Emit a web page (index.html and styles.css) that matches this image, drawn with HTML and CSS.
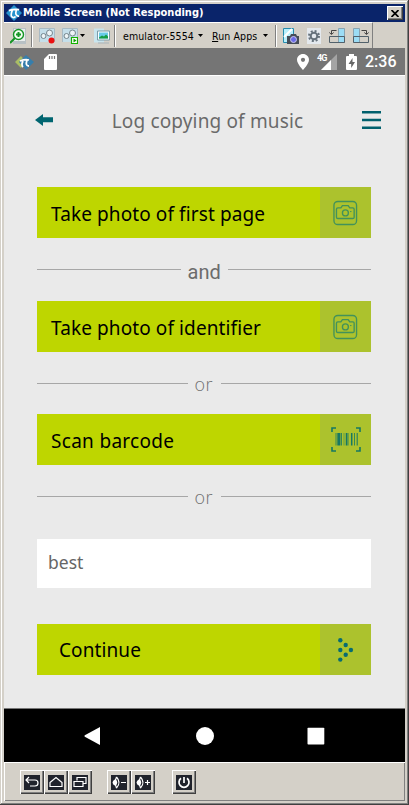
FILE: index.html
```html
<!DOCTYPE html>
<html lang="en">
<head>
<meta charset="utf-8">
<title>Mobile Screen</title>
<link rel="stylesheet" href="styles.css">
</head>
<body>
<svg class="defs" aria-hidden="true">
  <symbol id="camera" viewBox="0 0 26 26"><g fill="none" stroke="#42925a" stroke-width="1.4"><rect x="1" y="1" width="23.5" height="24" rx="4"/><path d="M5 7.700h3.200l1.600-2.300h6l1.600 2.300h3.200q1.400 0 1.400 1.400v8.200q0 1.400-1.400 1.400H5q-1.400 0-1.400-1.400V9.100q0-1.400 1.400-1.400z"/><circle cx="12.900" cy="12.900" r="3.100"/><path d="M17.700 11.500h1.500" stroke-width="1"/></g></symbol>
  <symbol id="link" viewBox="0 0 16 16"><path d="M0 0h16v14H0z" fill="#c5dfea"/><path d="M.5 14V.5h15V14" fill="none" stroke="#a9bac4"/><g fill="#edf4f6" stroke="#74858d"><circle cx="4.500" cy="8" r="2.500"/><circle cx="10.500" cy="5" r="3"/></g></symbol>
  <symbol id="rotate" viewBox="0 0 17 16"><path d="M9 0h7v14H9z" fill="#9bdcf5"/><path d="M9.500.5h6v14h-6z" fill="none" stroke="#8aa3b0"/><path d="M.5 8.500h15v6H.5z" fill="none" stroke="#52616b"/><path d="M2.500 6V2.500h5M.3 4.500l2.200 2 2.200-2" fill="none" stroke="#444"/></symbol>
</svg>
<main class="window">
  <header class="titlebar">
    <svg class="app-logo" viewBox="0 0 17 17"><path d="M8.500 0 17 8.500 8.500 17 0 8.500z" fill="#2693ce"/><path d="M3 6q5-2 11-1M7 5Q4 12 7 13q2 1 3-1M11 5q-2 7 3 7" fill="none" stroke="#fff" stroke-width="1.800"/></svg>
    <h1>Mobile Screen (Not Responding)</h1>
    <button class="close" aria-label="Close"><svg viewBox="0 0 8 7"><path d="M.5 0 7.500 7M7.500 0 .5 7" stroke="#000" stroke-width="1.700"/></svg></button>
  </header>
  <nav class="toolbar">
    <svg class="tool zoom" viewBox="0 0 16 16"><path d="M3 0h13v16H3z" fill="#b8c1c5"/><path d="M4 1h11v12H4z" fill="#e9eeee"/><circle cx="8.500" cy="6.500" r="5" fill="#f2fff1" stroke="#149525" stroke-width="1.400"/><path d="M8.500 4v5M6 6.500h5M5 10l-5 5" stroke="#149525" stroke-width="2"/></svg>
    <i class="sep first"></i>
    <div class="tool record"><svg viewBox="0 0 16 16"><use href="#link"/><circle cx="12.500" cy="12.500" r="3" fill="#eb1010"/></svg></div>
    <div class="tool play"><svg viewBox="0 0 16 16"><use href="#link"/><path d="M9.500 9.500h6v6h-6z" fill="#fff" stroke="#13b300" stroke-width="1.200"/><path d="m11.500 10.500 3 2-3 2z" fill="#0a9c00"/></svg></div>
    <i class="arrow play-arrow"></i>
    <svg class="tool picture" viewBox="0 0 16 15"><path d="M0 0h10v14H0z" fill="#c9e5ee"/><path d="M3.500 2.500h12v9h-12z" fill="#f8ffff" stroke="#7b9ca9"/><path d="M5 4h9v6H5z" fill="#68cbe8"/><path d="m5 9 3-2 2 1 2-2 2 2v2H5z" fill="#149c45"/><path d="M4 14.500h11" stroke="#a7b4ba"/></svg>
    <i class="sep second"></i>
    <span class="device">emulator-5554</span><i class="arrow device-arrow"></i>
    <span class="run"><u>R</u>un Apps</span><i class="arrow run-arrow"></i>
    <i class="sep third"></i>
    <svg class="tool snap" viewBox="0 0 16 16"><path d="M.5.5h10v14H.5z" fill="#b8effc" stroke="#268cae"/><path d="M1 9 9 1" stroke="#fff" stroke-width="2"/><path d="M4 8h3l1-2h5l1 2h2v8H4z" fill="#454c57"/><circle cx="10.500" cy="11.500" r="3" fill="#6b6be8" stroke="#c8c8ed"/></svg>
    <svg class="tool gear" viewBox="0 0 14 16"><path d="M0 0h14v16H0z" fill="#e4e9ee"/><circle cx="7" cy="8" r="5" fill="none" stroke="#65717b" stroke-width="2" stroke-dasharray="2 1.930"/><circle cx="7" cy="8" r="3.300" fill="none" stroke="#65717b" stroke-width="2"/></svg>
    <svg class="tool left" viewBox="0 0 17 16"><use href="#rotate"/></svg>
    <svg class="tool right" viewBox="0 0 17 16"><use href="#rotate"/></svg>
  </nav>
  <div class="status">
    <svg class="debug" viewBox="0 0 19 15"><path d="m0 7 6-6 5 6-5 6z" fill="#aabd65"/><path d="m4 7 7-7 8 7-8 8z" fill="#367eac"/><path d="M5 6q5-2 9-1M8 6q-2 4 0 6M12 5q-2 6 2 6" fill="none" stroke="#fff" stroke-width="1.800"/></svg>
    <svg class="sd" viewBox="0 0 13 16"><path d="M5 0h7q1 0 1 1v14q0 1-1 1H1q-1 0-1-1V5z" fill="#fff"/><path d="M5.500 2v3M8 2v3M10.500 2v3" stroke="#777" stroke-width="1.200"/></svg>
    <svg class="pin" viewBox="0 0 12 16"><path fill="#fff" fill-rule="evenodd" d="M6 0C2.700 0 0 2.500 0 5.800 0 10 6 16 6 16s6-6 6-10.200C12 2.500 9.300 0 6 0zm0 3.700a2.100 2.100 0 1 0 0 4.200 2.100 2.100 0 0 0 0-4.200z"/></svg>
    <span class="network">4G</span>
    <svg class="signal" viewBox="0 0 16 16"><path d="M16 0v16H0z" fill="#a4a4a4"/><path d="M10 6v10H0z" fill="#fff"/></svg>
    <svg class="battery" viewBox="0 0 11 16"><path d="M3 0h5v2h2q1 0 1 1v12q0 1-1 1H1q-1 0-1-1V3q0-1 1-1h2z" fill="#fff"/><path d="M6.500 4 2.500 10h2.700v4L9 8H6.500z" fill="#666"/></svg>
    <time>2:36</time>
  </div>
  <section class="screen">
    <header class="page-head">
      <svg class="back" viewBox="0 0 18 12"><path d="M0 6 8 0v3.300h10v5H8V12z" fill="#006570"/></svg>
      <h2>Log copying of music</h2>
      <svg class="menu" viewBox="0 0 19 18"><path d="M0 1.200h19M0 9h19M0 16.700h19" stroke="#00606d" stroke-width="2.400"/></svg>
    </header>
    <button class="action"><span class="t-first">Take photo of first page</span><b><svg class="camera"><use href="#camera"/></svg></b></button>
    <div class="divider and"><span>and</span></div>
    <button class="action"><span class="t-ident">Take photo of identifier</span><b><svg class="camera"><use href="#camera"/></svg></b></button>
    <div class="divider"><span>or</span></div>
    <button class="action"><span class="t-scan">Scan barcode</span><b><svg class="barcode" viewBox="0 0 30 25"><g fill="none" stroke="#167863"><path d="M1 5V1h4M25 1h4v4M29 20v4h-4M5 24H1v-4" stroke-width="1.600"/><path d="M5 6v12.500M17 6v12.500M23.500 6v12.500" stroke-width=".8"/><path d="M7.800 6v12.500" stroke-width="3"/><path d="M10.300 6v12.500M26.200 6v12.500" stroke-width="1"/><path d="M15.500 6v12.500M20.700 6v12.500" stroke-width="1.500"/><path d="M13 6v12.500" stroke-width=".5"/></g></svg></b></button>
    <div class="divider"><span>or</span></div>
    <div class="field">best</div>
    <button class="action continue"><span class="t-continue">Continue</span><b><svg class="dots" viewBox="0 0 16 24" fill="#086c70"><circle cx="2.300" cy="2.300" r="2.200"/><circle cx="7.700" cy="7" r="2.200"/><circle cx="2.300" cy="12" r="2.200"/><circle cx="12.900" cy="12" r="2.200"/><circle cx="7.700" cy="16.700" r="2.200"/><circle cx="2.300" cy="21.600" r="2.200"/></svg></b></button>
  </section>
  <nav class="android">
    <svg viewBox="0 0 18 18"><path d="M16 0v18L.8 9.700q-.8-.7 0-1.400z" fill="#fff"/></svg>
    <svg viewBox="0 0 18 18"><circle cx="9" cy="9" r="9" fill="#fff"/></svg>
    <svg viewBox="0 0 18 18"><rect x=".5" y=".7" width="16.800" height="16.800" rx=".8" fill="#fff"/></svg>
  </nav>
  <footer class="controls">
    <button><svg viewBox="0 0 16 15"><path d="M5 2 2 5l3 3M2 5h9q3 0 3 3t-3 3H6"/></svg></button>
    <button><svg viewBox="0 0 16 15"><path d="m2 7.500 6-5 6 5v4H2z"/></svg></button>
    <button><svg viewBox="0 0 16 15"><path d="M5 5.500V2.500h9v6h-3M2 6.500h9v5H2z"/></svg></button>
    <button class="volume"><svg viewBox="0 0 16 15"><path d="M5.500 2q5 5.500 0 11M5.500 2q-2.500 5.500 0 11M10 7.500h5"/><path class="solid" d="M4.500 4q3.500 3.500 0 7-3-1.500-3-3.500t3-3.500z"/></svg></button>
    <button><svg viewBox="0 0 16 15"><path d="M5.500 2q5 5.500 0 11M5.500 2q-2.500 5.500 0 11M10 7.500h5M12.500 5v5"/><path class="solid" d="M4.500 4q3.500 3.500 0 7-3-1.500-3-3.500t3-3.500z"/></svg></button>
    <button class="power"><svg viewBox="0 0 16 15"><path stroke-width="1.700" d="M5 3.300a5 5 0 1 0 6 0M8 2v6"/></svg></button>
  </footer>
</main>
</body>
</html>
```
FILE: styles.css
```css
* { box-sizing: border-box; }
body { margin: 0; }
.defs { position: absolute; width: 0; height: 0; }
svg { display: block; flex: none; }
h1, h2 { margin: 0; font-weight: normal; white-space: nowrap; }
button { padding: 0; border: 0; border-radius: 0; }

.window {
  width: 409px; height: 805px; padding: 4px;
  display: flex; flex-direction: column;
  background: #d4d0c8;
  box-shadow: inset -1px -1px #404040, inset 1px 1px #d4d0c8, inset -2px -2px #808080, inset 2px 2px #fff;
}

.titlebar { height: 18px; display: flex; align-items: center; flex: none; padding: 0 2px; background: #0a246a; color: #fff; }
.app-logo { width: 16px; height: 16px; }
.titlebar h1 { margin-left: 1px; font: bold 11px/18px "DejaVu Sans Condensed", "DejaVu Sans", sans-serif; }
.close { width: 16px; height: 14px; margin-left: auto; display: grid; place-items: center; background: #d4d0c8; box-shadow: inset 1px 1px #fff, inset -1px -1px #404040, inset -2px -2px #808080; }
.close svg { width: 8px; height: 7px; }

.toolbar { height: 26px; width: 369px; flex: none; display: flex; align-items: center; padding-left: 6px; border-top: 1px solid #fff; border-right: 1px solid #808080; font: 10.5px/16px "DejaVu Sans Condensed", "DejaVu Sans", sans-serif; letter-spacing: .1px; color: #000; white-space: nowrap; }
.toolbar > * { flex: none; }
.tool, .tool svg { width: 16px; height: 16px; }
.sep { width: 2px; height: 22px; border-left: 1px solid #808080; border-right: 1px solid #fff; }
.sep.first { margin-left: 5px; }
.record { margin-left: 6px; }
.play { margin-left: 7px; }
.arrow { width: 5px; height: 3px; background: #000; clip-path: polygon(0 0, 100% 0, 50% 100%); }
.play-arrow { margin-left: 2px; }
.picture { margin-left: 9px; }
.sep.second { margin-left: 4px; }
.device { width: 71px; margin-left: 7px; }
.device-arrow { margin-left: 4px; }
.run { width: 47px; margin-left: 9px; }
.run-arrow { margin-left: 4px; }
.sep.third { margin-left: 7px; }
.snap { margin-left: 6px; }
.gear { width: 14px; margin-left: 8px; }
.left { width: 17px; margin-left: 8px; }
.right { width: 17px; margin-left: 6px; transform: scaleX(-1); }

.status { height: 27px; display: flex; align-items: center; flex: none; padding: 1px 9px 0 11px; background: #757575; color: #fff; }
.debug { width: 19px; height: 15px; }
.sd { width: 13px; height: 16px; margin-left: 10px; }
.pin { width: 12px; height: 16px; margin-left: auto; }
.network { width: 10px; margin: -8px -6px 0 8px; font: bold 9px/9px Roboto, sans-serif; letter-spacing: -.8px; }
.signal { width: 16px; height: 16px; }
.battery { width: 11px; height: 16px; margin-left: 9px; }
.status time { width: 31px; margin-left: 8px; font: 500 16px/26px Roboto, sans-serif; white-space: nowrap; }

.screen { height: 633px; flex: none; padding: 0 34px 0 33px; border-top: 1px solid #fff; background: #eaeaea; color: #000; font-family: "Noto Sans", "Open Sans", sans-serif; }
.page-head { height: 111px; display: flex; align-items: flex-start; justify-content: space-between; margin: 0 -10px 0 -2px; }
.back { width: 18px; height: 12px; margin-top: 38px; }
.page-head h2 { margin-top: 31px; color: #6a6a6a; font: 19px/28px "Noto Sans", sans-serif; letter-spacing: .15px; }
.menu { width: 19px; height: 18px; margin-top: 35px; }
.action { width: 334px; height: 51px; display: flex; align-items: center; background: #bed600; color: #000; font: 19px/28px "Noto Sans", sans-serif; letter-spacing: .1px; text-align: left; white-space: nowrap; }
.action span { flex: 1; padding: 3px 0 0 14px; }
.action .t-scan { letter-spacing: .3px; }
.action b { width: 51px; height: 51px; display: grid; place-items: center; background: #acc22d; }
.camera { width: 25px; height: 26px; }
.barcode { width: 30px; height: 25px; }
.dots { width: 16px; height: 24px; }
.divider { height: 62px; display: flex; align-items: center; gap: 7px; color: #707070; font: 300 18px/28px "Open Sans", sans-serif; letter-spacing: .5px; }
.divider::before, .divider::after { content: ""; height: 1px; flex: 1; background: #a7a7a7; }
.divider span { width: 19px; padding-top: 2px; white-space: nowrap; }
.divider.and { height: 63px; color: #6c6c6c; font: 20px/28px Roboto, sans-serif; letter-spacing: 0; }
.divider.and span { width: 33px; padding-top: 4px; }
.field { height: 49px; margin-top: 12px; padding: 0 11px; background: #fff; color: #666; font: 17.5px/47px "Noto Sans", sans-serif; }
.continue { margin-top: 36px; }
.action .t-continue { padding: 1px 0 0 22px; }

.android { height: 54px; flex: none; display: flex; align-items: center; justify-content: space-between; padding: 0 80px; background: #000; border-top: 1px solid #777; }
.android svg { width: 18px; height: 18px; }

.controls { height: 39px; flex: none; display: flex; align-items: flex-start; padding: 8px 0 0 16px; box-shadow: inset 1px 1px #fff, inset -1px -1px #808080; }
.controls button { width: 24px; height: 24px; display: grid; place-items: center; background: #d4d0c8; box-shadow: inset 1px 1px #fff, inset -1px -1px #404040, inset -2px -2px #808080; }
.controls svg { width: 16px; height: 15px; background: #20232c; fill: none; stroke: #fff; stroke-width: 1.2; }
.controls .solid { fill: #fff; stroke: none; }
.volume { margin-left: 15px; }
.power { margin-left: 17px; }
```
